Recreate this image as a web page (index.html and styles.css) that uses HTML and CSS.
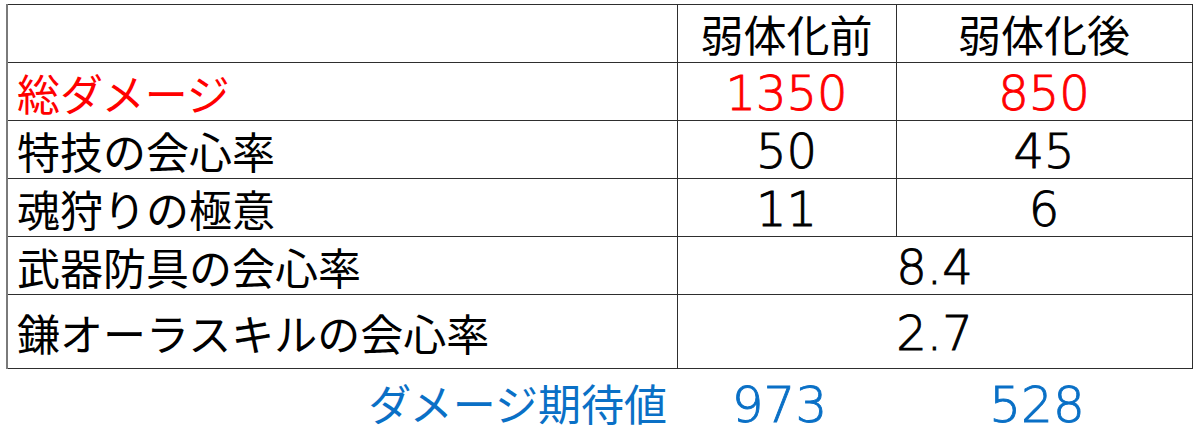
FILE: index.html
```html
<!DOCTYPE html>
<html lang="ja">
<head>
<meta charset="utf-8">
<title>ダメージ期待値</title>
<link rel="stylesheet" href="styles.css">
</head>
<body>
<table class="stats">
  <colgroup>
    <col class="c-label">
    <col class="c-pre">
    <col class="c-post">
  </colgroup>
  <thead>
    <tr class="head">
      <th class="blank"></th>
      <th class="colname">弱体化前</th>
      <th class="colname">弱体化後</th>
    </tr>
  </thead>
  <tbody>
    <tr class="row red">
      <th class="label">総ダメージ</th>
      <td class="num">1350</td>
      <td class="num">850</td>
    </tr>
    <tr class="row">
      <th class="label">特技の会心率</th>
      <td class="num">50</td>
      <td class="num">45</td>
    </tr>
    <tr class="row">
      <th class="label">魂狩りの極意</th>
      <td class="num">11</td>
      <td class="num">6</td>
    </tr>
    <tr class="row">
      <th class="label">武器防具の会心率</th>
      <td class="num" colspan="2">8.4</td>
    </tr>
    <tr class="row tall">
      <th class="label">鎌オーラスキルの会心率</th>
      <td class="num" colspan="2">2.7</td>
    </tr>
  </tbody>
  <tfoot>
    <tr class="expect">
      <th class="expect-label">ダメージ期待値</th>
      <td class="expect-num">973</td>
      <td class="expect-num">528</td>
    </tr>
  </tfoot>
</table>
</body>
</html>
```

FILE: styles.css
```css
html, body {
  margin: 0;
  padding: 0;
  background: #ffffff;
}

body {
  font-family: "Noto Sans CJK JP", "Noto Sans", sans-serif;
  color: #000000;
}

.stats {
  border-collapse: collapse;
  table-layout: fixed;
  margin: 4px 0 0 6px;
  width: 1185px;
}

.c-label { width: 670px; }
.c-pre { width: 219px; }
.c-post { width: 296px; }

.stats thead th,
.stats tbody th,
.stats tbody td {
  border: 1px solid #2e2e2e;
  padding: 0;
  font-weight: normal;
}

.stats .blank,
.stats .label {
  border-left: 2px solid #7a7a7a;
}

.head th {
  height: 58px;
  font-size: 43px;
  line-height: 1;
  vertical-align: middle;
  text-align: center;
  padding-top: 6px;
  box-sizing: border-box;
}

.row th,
.row td {
  height: 58px;
  box-sizing: border-box;
  vertical-align: middle;
}

.row.tall th,
.row.tall td {
  height: 74px;
}

.label {
  text-align: left;
  font-size: 43px;
  line-height: 1;
  padding-left: 9px !important;
  padding-top: 2px !important;
}

.stats .num {
  text-align: center;
  font-family: "DejaVu Sans", "Noto Sans", sans-serif;
  font-weight: 200;
  -webkit-text-stroke: 0.9px currentColor;
  font-size: 48px;
  line-height: 1;
  padding-top: 3px;
}

.red .label,
.red .num {
  color: #ff0000;
}

.expect th,
.expect td {
  border: none;
  height: 60px;
  padding: 0;
  font-weight: normal;
  color: #0a70c6;
  vertical-align: middle;
  line-height: 1;
}

.expect-label {
  text-align: right;
  font-size: 43px;
  padding-right: 10px !important;
}

.stats .expect-num {
  text-align: center;
  font-family: "DejaVu Sans", "Noto Sans", sans-serif;
  font-weight: 200;
  -webkit-text-stroke: 0.9px currentColor;
  font-size: 50px;
  padding-right: 14px;
  padding-top: 6px;
}
```
